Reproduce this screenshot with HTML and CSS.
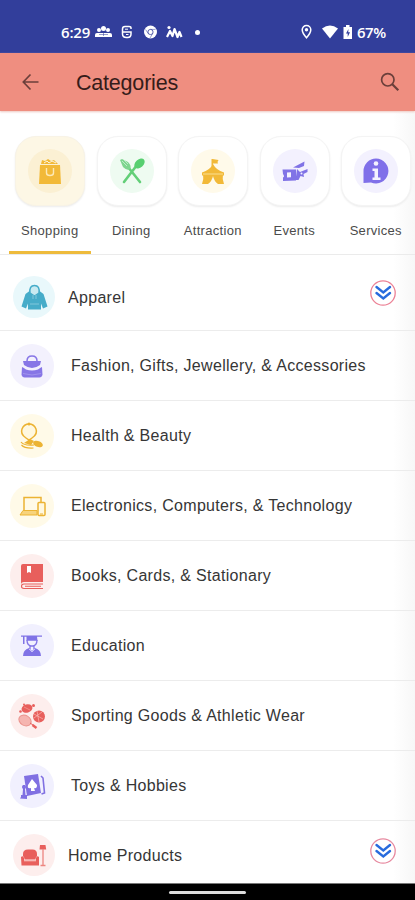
FILE: index.html
```html
<!DOCTYPE html>
<html lang="en">
<head>
<meta charset="utf-8">
<meta name="viewport" content="width=device-width, initial-scale=1">
<title>Categories</title>
<link rel="stylesheet" href="styles.css">
</head>
<body>
<div class="screen">
  <div class="status">
    <span class="time">6:29</span>
    <svg class="status-left" width="108" height="16" viewBox="0 0 108 16" fill="#fff">
      <circle cx="4" cy="6" r="2"/><circle cx="8.500" cy="4.500" r="2.500"/><circle cx="13" cy="6" r="2"/>
      <path d="M0 13V11q0-2 2-2h13q2 0 2 2v2z"/><path d="M4 10.500h9M8.500 7v5" stroke="#323e9b" stroke-width=".5"/>
      <path d="M36 5V4q0-1.500-2-1.500h-4q-2.500 0-2.500 2.500v5q0 3.500 4 3.500h1q3.500 0 3.500-3.500V8H28" fill="none" stroke="#fff" stroke-width="1.500"/><path d="M30 5.200h3M31 10.500h2.500" stroke="#fff"/>
      <circle cx="55.500" cy="8" r="6.500"/><circle cx="55.500" cy="8" r="2.600" fill="none" stroke="#323e9b" stroke-width=".8"/><path d="M55.500 5.400h5M53.200 9.500l-2.600-4M57.700 9.500L55 14" stroke="#323e9b" stroke-width=".5"/>
      <path d="M72 13l3-6 2.500 5 2-7 3 8 2-5 2 5" fill="none" stroke="#fff" stroke-width="2.200" stroke-linejoin="round"/><circle cx="74" cy="3.500" r="1.600"/>
      <circle cx="102.500" cy="8.500" r="2.500"/>
    </svg>
    <svg class="status-right" width="54" height="16" viewBox="0 0 54 16" fill="#fff">
      <path d="M6.500 1.500a4.300 4.300 0 0 1 4.300 4.300c0 3.200-4.300 8-4.300 8S2.200 9 2.200 5.800A4.300 4.300 0 0 1 6.500 1.500z" fill="none" stroke="#fff" stroke-width="1.500"/><circle cx="6.500" cy="5.800" r="1.700"/>
      <path d="M22 4.500q8-6 16 0L30 14.500z"/>
      <path d="M44 3h2V1h3.500v2H52v12H43.500V3z"/><path d="M48.500 5l-2.500 4.500h1.700v3.500l2.300-4.800h-1.800z" fill="#323e9b"/>
    </svg>
    <span class="percent">67%</span>
  </div>
  <header class="bar">
    <svg class="back" width="18" height="18" viewBox="0 0 18 18" fill="none" stroke="#6b3f3a" stroke-width="1.700"><path d="M16.500 9H1.500M8.500 1.500L1.300 9l7.200 7.500"/></svg>
    <h1>Categories</h1>
    <svg class="search" width="20" height="20" viewBox="0 0 20 20" fill="none" stroke="#6b3f3a" stroke-width="1.700"><circle cx="7.800" cy="7.800" r="6.200"/><path d="M12.300 12.300l6 6" stroke-width="2.200"/></svg>
  </header>

  <nav class="tabs">
    <div class="tab active"><div class="card"><svg width="44" height="44" viewBox="0 0 44 44"><circle cx="22" cy="22" r="22" fill="#fbf0d3"/><path d="M12 16h20l1 19H11z" fill="#f2b938"/><path d="M13 15l1-4 3 1 3-2 3 2 3-1 4 4z" fill="#f2b938"/><path d="M16 14l3-2 2 2 3-2 4 2" fill="none" stroke="#fdf4dc"/><path d="M18.500 19v5q0 2.500 3.500 2.500t3.500-2.500v-5" fill="none" stroke="#fde9b5" stroke-width="1.400"/></svg></div><span>Shopping</span></div>
    <div class="tab"><div class="card"><svg width="44" height="44" viewBox="0 0 44 44"><circle cx="22" cy="22" r="22" fill="#eefbf1"/><g stroke="#63cf78" stroke-width="2.600" stroke-linecap="round"><path d="M18 18l12 15M27 16L14 33"/></g><path d="M10 11l2-1 6 3q4 4 2 7-3 2-7-2z" fill="#7ed58f"/><path d="M12 12l5 5M14 11l4 4" stroke="#d7f5dd" stroke-width=".7"/><ellipse cx="29.500" cy="14.500" rx="6" ry="4" transform="rotate(-42 29.500 14.500)" fill="#57cf70"/></svg></div><span>Dining</span></div>
    <div class="tab"><div class="card"><svg width="44" height="44" viewBox="0 0 44 44"><circle cx="22" cy="22" r="22" fill="#fffaea"/><path d="M20.500 18v-8h1l6 1-1 2 .5 1.500H22V18z" fill="#f2b938"/><path d="M22 15q3 6 11 8.500v3H11v-3q8-2.500 11-8.500z" fill="#f2b938"/><path d="M12 24h20q-1 6 1 11h-6q-4-3-5-8-1 5-5 8h-6q2-5 1-11z" fill="#f2b938"/><path d="M12 25h20" stroke="#fde9a9" stroke-width=".8"/></svg></div><span>Attraction</span></div>
    <div class="tab"><div class="card"><svg width="44" height="44" viewBox="0 0 44 44"><circle cx="22" cy="22" r="22" fill="#f3f1fe"/><path d="M9.500 20.500h13.500v11L10 32v-3.500q2-.8 0-3.500zM20 18.500l11.500-6-.5 4.500-5 2zM24 20l3 3 7.500-3v3l-4 2 .5 3-3.500-1-2 4h-3z" fill="#8073e6"/><path d="M14 23.500l4-.3v5l-4 .3z" fill="#f3f1fe"/><circle cx="28.500" cy="24.500" r="1" fill="#f3f1fe"/></svg></div><span>Events</span></div>
    <div class="tab"><div class="card"><svg width="44" height="44" viewBox="0 0 44 44"><circle cx="22" cy="22" r="22" fill="#f3f1fe"/><path d="M22 9.500a12.500 12.500 0 1 1-5 24L9.500 34V22A12.500 12.500 0 0 1 22 9.500z" fill="#8070e9"/><circle cx="22" cy="14.500" r="2.300" fill="#f5f2ff"/><path d="M18.500 19.500h5.500v9h2.500V31h-8v-2.500h2V22h-2z" fill="#f5f2ff"/></svg></div><span>Services</span></div>
  </nav>

  <main class="list">
    <div class="row parent first">
      <svg class="icon" width="42" height="42" viewBox="1 1 42 42"><circle cx="22" cy="22" r="21" fill="#e9f8fb"/><path d="M17.500 16l-4 3-4 12.500 4.500 2 2-5v6h13v-6l2 5 4.500-2-4-12.500-4-3z" fill="#46acc9"/><path d="M18 18q-1-7.500 4.500-7.500T27 18l-4.500 3z" fill="#c9eaf1" stroke="#46acc9" stroke-width="1.500"/><path d="M21 20v4M24 20v4M18 29h9" stroke="#a9dce8" stroke-width=".6"/></svg>
      <span class="name">Apparel</span>
      <svg class="expand" width="26" height="26" viewBox="0 0 26 26" fill="none"><circle cx="13" cy="13" r="12.200" stroke="#ec8296" stroke-width="1.300"/><path d="M6.500 7l6.800 5.500L20 7M6.500 13l6.800 5.500L20 13" stroke="#286bdd" stroke-width="2.400" stroke-linecap="round"/></svg>
    </div>
    <div class="row"><svg class="icon" width="44" height="44" viewBox="0 0 44 44"><circle cx="22" cy="22" r="22" fill="#f3f1fd"/><path d="M17 17q0-5 5-5t5 5" fill="none" stroke="#8776e6" stroke-width="1.500"/><path d="M13 17h18l-1 4q-4 3-8 3t-8-3zM12 23q1 0 4 2.500 6 2 12 0 3-2.500 4-2.500l.5 8q-1 2.500-3 2.500h-15q-2 0-3-2.500z" fill="#8776e6"/><path d="M13 29.500q9 3 18 0" fill="none" stroke="#b3a8f1" stroke-width=".6"/></svg><span class="name">Fashion, Gifts, Jewellery, &amp; Accessories</span></div>
    <div class="row"><svg class="icon" width="44" height="44" viewBox="0 0 44 44"><circle cx="22" cy="22" r="22" fill="#fffae8"/><path d="M16 24q-6-4-4-9 2-5 7-5t7 5q2 5-4 9l-3 2z" fill="#fff8df" stroke="#ecb333" stroke-width="1.500"/><circle cx="19" cy="10" r="1.500" fill="#ecb333"/><path d="M11 28q3 4 13 3M11.500 31q3 3.500 12 3" fill="none" stroke="#ecb333" stroke-width="1.200"/><path d="M14 29l6-4 4 2-3 4z" fill="#ecb333"/><ellipse cx="28" cy="30" rx="5" ry="3" transform="rotate(20 28 30)" fill="#ecb333"/></svg><span class="name">Health &amp; Beauty</span></div>
    <div class="row"><svg class="icon" width="44" height="44" viewBox="0 0 44 44"><circle cx="22" cy="22" r="22" fill="#fffae8"/><path d="M14 26V13.500h17V18" fill="none" stroke="#ecb333" stroke-width="1.500"/><path d="M13 26.500h14v4.500H10z" fill="#f7d37d" stroke="#ecb333"/><rect x="28" y="18.500" width="7" height="13" rx="1" fill="#fff8df" stroke="#ecb333" stroke-width="1.500"/><path d="M30 30h3" stroke="#ecb333"/></svg><span class="name">Electronics, Computers, &amp; Technology</span></div>
    <div class="row"><svg class="icon" width="44" height="44" viewBox="0 0 44 44"><circle cx="22" cy="22" r="22" fill="#fdeeed"/><path d="M13 10h20v18H14q-3 0-3 3V12q0-2 2-2z" fill="#e85f5c"/><path d="M33 30H14q-2.500 0-2.500 2.200T14 34.500h19M15 32.300H31" fill="none" stroke="#e85f5c" stroke-width="1.100"/><path d="M17 12h4v7l-2-1-2 1z" fill="#fff"/></svg><span class="name">Books, Cards, &amp; Stationary</span></div>
    <div class="row"><svg class="icon" width="44" height="44" viewBox="0 0 44 44"><circle cx="22" cy="22" r="22" fill="#f1f0fe"/><path d="M11 11.500h21v1.300h-5l.5 4H16.500v-4h-2V20H13v-7.200h-2z" fill="#8073e6"/><path d="M17 16q0 6 5 6t5-6M20 21v4M24 21v4" fill="none" stroke="#8073e6" stroke-width="1.300"/><path d="M19 24l3 3 3-3q6 2 6 8H13q0-6 6-8z" fill="#8073e6"/><path d="M19 25l3 3 3-3" fill="none" stroke="#e5e1ff" stroke-width=".7"/></svg><span class="name">Education</span></div>
    <div class="row"><svg class="icon" width="44" height="44" viewBox="0 0 44 44"><circle cx="22" cy="22" r="22" fill="#fdeeed"/><ellipse cx="17" cy="14.500" rx="5.500" ry="4.200" transform="rotate(-15 17 14.500)" fill="#e85f5c"/><circle cx="10.500" cy="17.500" r="1.300" fill="#e85f5c"/><circle cx="23.500" cy="11.500" r="1.500" fill="#e85f5c"/><circle cx="14" cy="10.500" r="1" fill="#e85f5c"/><path d="M14 13l6 3" stroke="#f6aaa5" stroke-width=".6"/><circle cx="29" cy="22.500" r="6" fill="#e85f5c"/><path d="M24 20l9 5M24 24l8-6M27 17l2 11" stroke="#f9b9b4" stroke-width=".7"/><ellipse cx="15" cy="26.500" rx="6.500" ry="5" transform="rotate(30 15 26.500)" fill="#f5b5b0" stroke="#ea928c"/><path d="M20 29l3 2" stroke="#e85f5c"/><path d="M22.500 31l4 3" stroke="#e85f5c" stroke-width="2.400"/></svg><span class="name">Sporting Goods &amp; Athletic Wear</span></div>
    <div class="row"><svg class="icon" width="44" height="44" viewBox="0 0 44 44"><circle cx="22" cy="22" r="22" fill="#f1f0fe"/><path d="M14 12l14-2 3 19-14 3z" fill="#8070e2"/><path d="M22 15l5 6q0 4-3 3l1 3h-4v-3q-4 1-3-3z" fill="#fff"/><path d="M31 12l2 2 1.500 15-3 1" fill="none" stroke="#8070e2" stroke-width="1.600"/><path d="M11 33v-2h1.500l.5-6q-2-2 0-4h2q2 2 0 4l.5 6H17v4l-7-.5z" fill="#8070e2"/></svg><span class="name">Toys &amp; Hobbies</span></div>
    <div class="row parent last">
      <svg class="icon" width="42" height="42" viewBox="1 1 42 42"><circle cx="22" cy="22" r="21" fill="#fdeeed"/><path d="M11 21q0-4.500 5-4.500h4.500q4.500 0 4.500 4.500v2q-1.500 1-1.500 3.500H12.500Q12.500 24 11 23zM9 24q2-2 3 1v2.500h12V25q1-3 3-1v8.500H9.500z" fill="#e85f5c"/><path d="M12 27.800h12" stroke="#fac1bd"/><path d="M28 12h5.500l.7 4.500h-6.700z" fill="#e85f5c"/><path d="M31 16v16M28.500 32.500h5" stroke="#ed8580" stroke-width="1.300"/></svg>
      <span class="name">Home Products</span>
      <svg class="expand" width="26" height="26" viewBox="0 0 26 26" fill="none"><circle cx="13" cy="13" r="12.200" stroke="#e78aa0" stroke-width="1.300"/><path d="M6.500 7l6.800 5.500L20 7M6.500 13l6.800 5.500L20 13" stroke="#286bdd" stroke-width="2.400" stroke-linecap="round"/></svg>
    </div>
  </main>
  <footer class="home"><i></i></footer>
</div>
</body>
</html>
```
FILE: styles.css
```css
* { box-sizing: border-box; margin: 0; }
body { font-family: "Liberation Sans", Arial, sans-serif; background: #fff; }
svg { display: block; flex: none; }
.screen { width: 415px; height: 900px; overflow: hidden; display: flex; flex-direction: column; background: linear-gradient(to right, #fff 393px, #f7f7f7 415px); }
.status { height: 53px; flex: none; background: #323e9b; color: #fff; display: flex; align-items: center; padding: 11px 29px 0 61px; font: 600 15px "Open Sans", sans-serif; }
.time { width: 34px; letter-spacing: -.2px; }
.status-right { margin-left: auto; }
.percent { width: 29px; margin-left: 3px; letter-spacing: -.5px; }
.bar { height: 58px; flex: none; background: #ef8e80; display: flex; align-items: center; padding: 0 15px 0 22px; box-shadow: 0 1px 2px #edc7c0; }
.bar h1 { font-size: 21.500px; font-weight: 400; color: #351c1a; letter-spacing: -.2px; margin-left: 36px; line-height: 28px; padding-top: 1px; }
.search { margin-left: auto; }
.tabs { height: 144px; flex: none; display: flex; padding: 25px 0 0 9px; border-bottom: 1px solid #ebebeb; }
.tab { width: 81.500px; flex: none; display: flex; flex-direction: column; align-items: center; font-size: 13px; letter-spacing: .3px; color: #4b4b4b; }
.tab span { margin-top: 17px; line-height: 16px; }
.card { width: 70px; height: 70px; border: 1px solid #f4f4f4; border-radius: 21px; background: #fff; display: grid; place-items: center; box-shadow: 0 1px 2px #ececec; }
.active { border-bottom: 3px solid #eebb3c; }
.active .card { background: #fdf7e5; border-color: #f8f3e6; }
.tab:not(.active) .card { margin-left: 1px; }
.list { flex: 1; min-height: 0; display: flex; flex-direction: column; }
.row { height: 70px; flex: none; display: flex; align-items: center; padding: 0 19px 0 10px; border-bottom: 1px solid #ececec; }
.name { margin-left: 17px; font-size: 16px; letter-spacing: .31px; color: #363636; white-space: nowrap; line-height: 20px; padding-top: 1px; }
.parent { padding-left: 13px; }
.parent .name { margin-left: 13px; }
.first { height: 76px; }
.first .icon, .first .name { margin-top: 9px; }
.first .expand, .last .expand { margin-left: auto; }
.last { height: 62px; border-bottom: 0; }
.last .icon, .last .name { margin-top: 6px; }
.last .expand { margin-top: -3px; }
.home { height: 17px; flex: none; background: #000; border-top: 1px solid #777; display: flex; justify-content: center; padding-top: 7px; }
.home i { width: 77px; height: 3px; border-radius: 2px; background: #ddd; }
```
